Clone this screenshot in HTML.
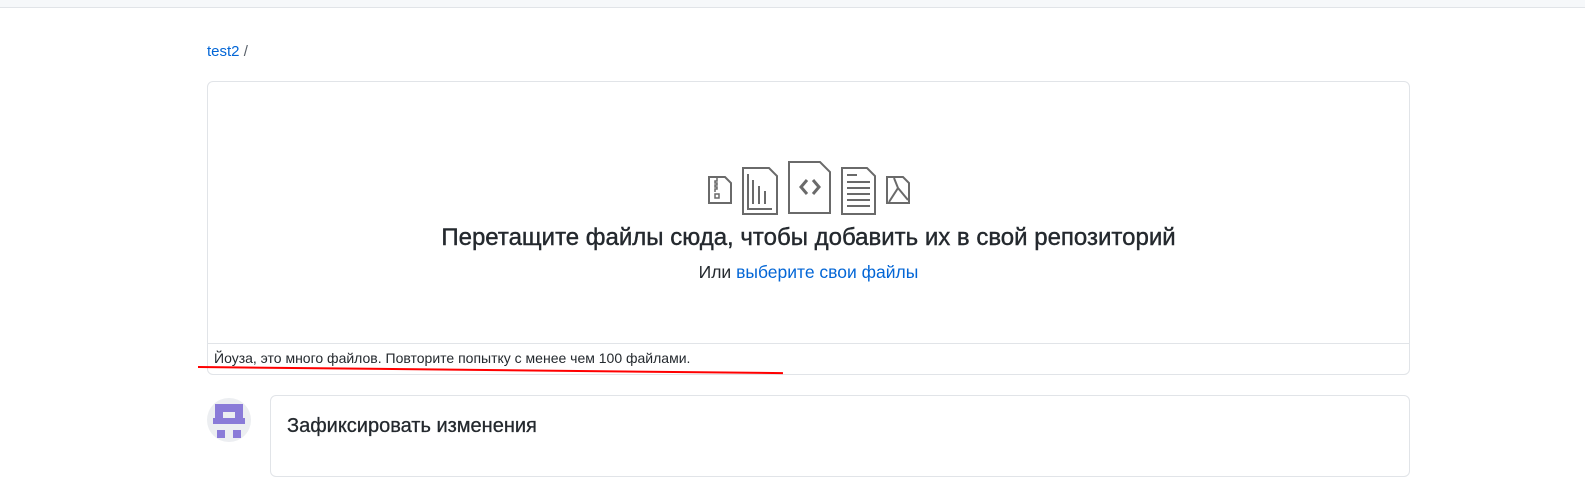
<!DOCTYPE html>
<html><head><meta charset="utf-8"><style>
body{margin:0;width:1585px;height:452px;overflow:hidden;background:#fff;font-family:"Liberation Sans","Noto Sans CJK SC",sans-serif;position:relative}
.top{position:absolute;left:0;top:0;width:1585px;height:7px;background:#f6f8fa;border-bottom:1px solid #e1e4e8}
.bc{position:absolute;left:207px;top:43px;font-size:15px;color:#586069}
.bc a{color:#0366d6;text-decoration:none}
.box{position:absolute;left:207px;top:81px;width:1201px;height:292px;border:1px solid #e1e4e8;border-radius:6px}
.foot{position:absolute;left:0;right:0;top:261px;border-top:1px solid #e1e4e8;height:30px;font-size:14px;color:#24292e;padding:6px 0 0 6px;box-sizing:border-box}
h2{position:absolute;left:0;width:1201px;top:142px;margin:0;text-align:center;font-size:24px;font-weight:normal;color:#24292e;-webkit-text-stroke:0.4px #24292e}
.or{position:absolute;left:0;width:1201px;top:180px;text-align:center;font-size:17.5px;color:#24292e}
.or a{color:#0366d6}
.red{position:absolute;left:198px;top:366px;width:585px;height:2px;background:#f00;transform:rotate(0.6deg);transform-origin:left}
.av{position:absolute;left:207px;top:398px;width:44px;height:44px;border-radius:50%;background:#eceef1;overflow:hidden}
.cb{position:absolute;left:270px;top:395px;width:1138px;height:80px;border:1px solid #e1e4e8;border-radius:6px}
.cb div{position:absolute;left:16px;top:19px;font-size:20px;color:#24292e;-webkit-text-stroke:0.3px #24292e}
</style></head><body>
<div class="top"></div>
<div class="bc"><a>test2</a> /</div>
<div class="box">
<svg style="position:absolute;left:0;top:0" width="1201" height="140">
<g fill="none" stroke="#6a6a6a" stroke-width="2">
<path d="M501 95h16l6 6v20h-22z"/>
<path d="M535 86h26l8 8v38h-34z M540 92v35h24 M545 98v24 M551 104v18 M557 109v13"/>
<path d="M581 80h31l10 10v41h-41z"/>
<path d="M599 98l-6 7 6 7 M605 98l6 7-6 7" stroke-width="3"/>
<path d="M634 86h25l8 8v38h-33z M639 93h10 M639 100h23 M639 106h23 M639 112h23 M639 118h23 M639 124h23"/>
<path d="M679 95h16l6 6v20h-22z M686 96l4 10-9 14 M690 106l10 12"/>
</g>
<path d="M509 96v3h-2v2h2v2h-2v2h2v2h-2v3 M507 112h4v4h-4z" fill="none" stroke="#6a6a6a" stroke-width="1.5"/>
</svg>
<h2>Перетащите файлы сюда, чтобы добавить их в свой репозиторий</h2>
<div class="or">Или <a>выберите свои файлы</a></div>
<div class="foot">Йоуза, это много файлов. Повторите попытку с менее чем 100 файлами.</div>
</div>
<div class="red"></div>
<div class="av"><svg width="44" height="44"><g fill="#8a7bd8"><rect x="8" y="6" width="28" height="8"/><rect x="8" y="6" width="8" height="14"/><rect x="28" y="6" width="8" height="14"/><rect x="6" y="20" width="32" height="6"/><rect x="10" y="32" width="8" height="8"/><rect x="26" y="32" width="8" height="8"/></g></svg></div>
<div class="cb"><div>Зафиксировать изменения</div></div>
</body></html>
